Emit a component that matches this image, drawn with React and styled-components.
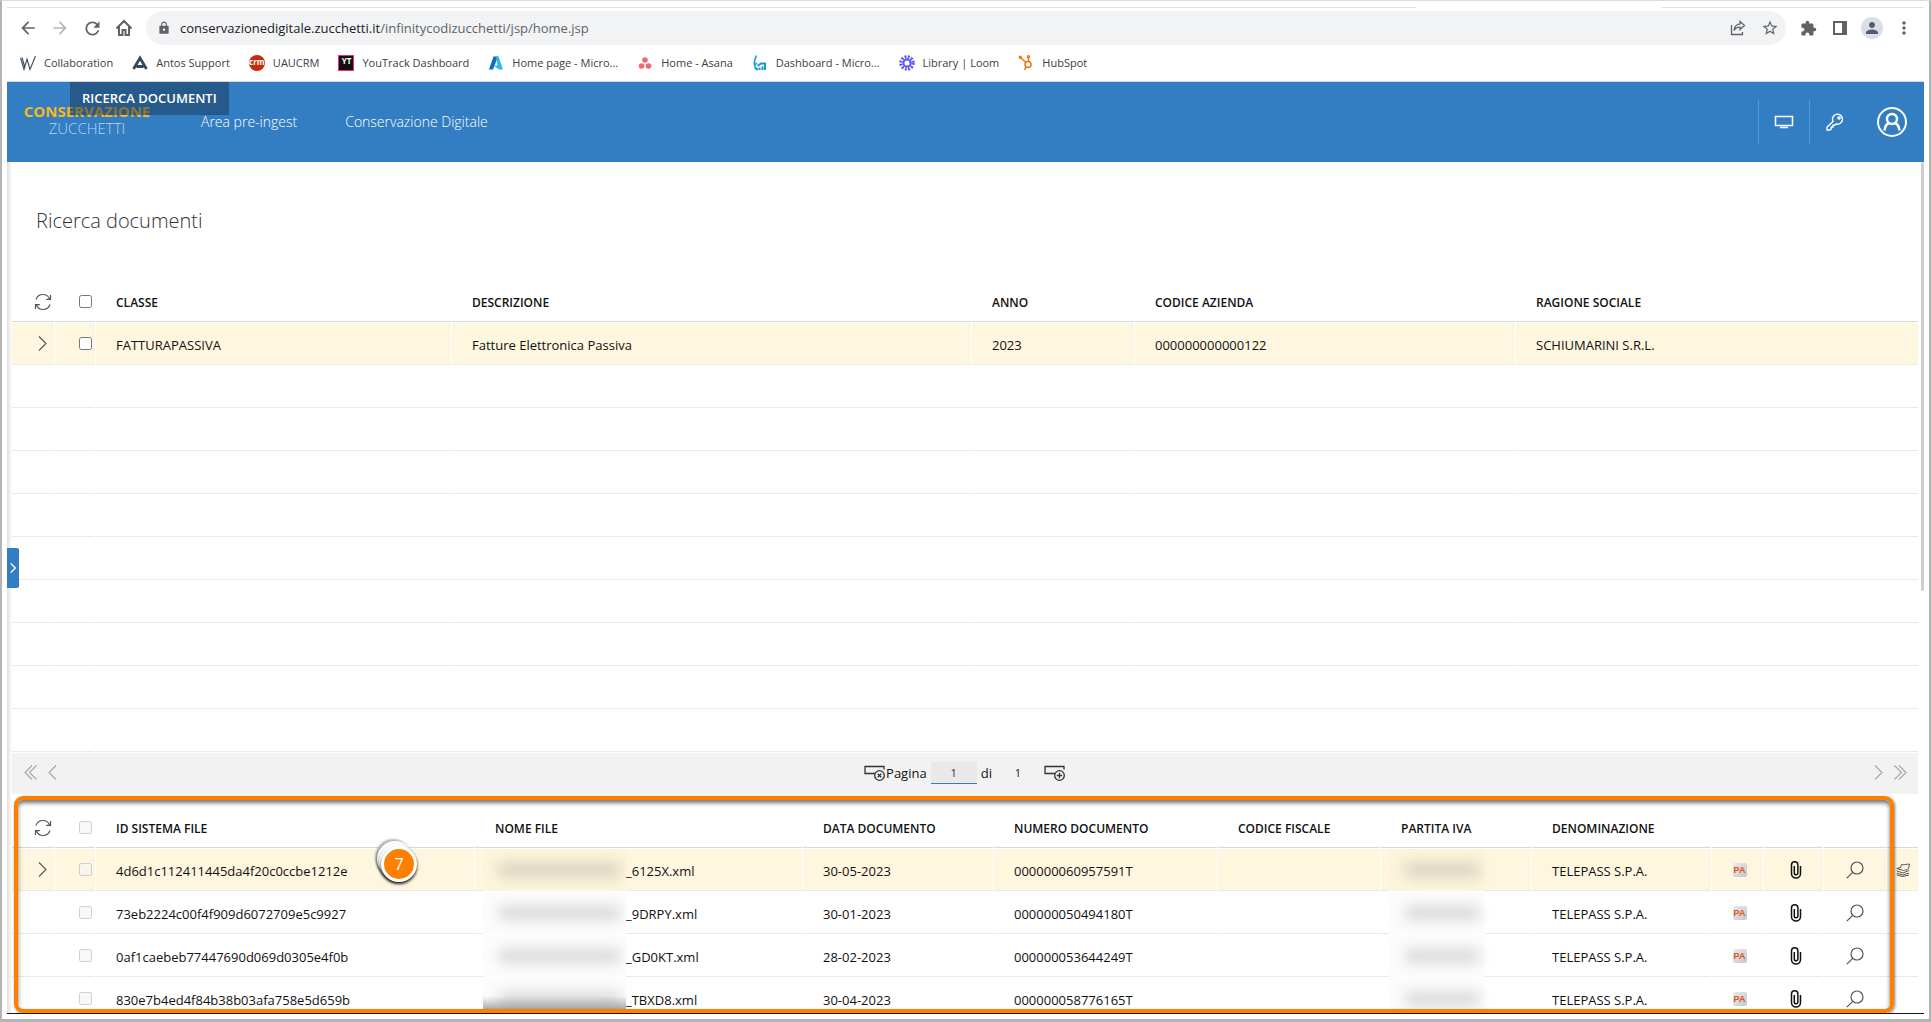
import React from 'react'
import styled, { createGlobalStyle } from 'styled-components'
import { MdArrowBack, MdArrowForward, MdRefresh, MdLock, MdExtension, MdPerson, MdMoreVert, MdStarBorder } from 'react-icons/md'

const GlobalStyle = createGlobalStyle`
  * {
    box-sizing: border-box;
  }
  body {
    margin: 0;
    background: #fff;
    color: #111;
    font-family: "Open Sans", "Noto Sans", sans-serif;
    font-size: 13px;
  }
`

const Frame = styled.div`
  display: flex;
  flex-direction: column;
  height: 100vh;
  padding: 4px 5px 5px;
  border: solid #b4b4b4;
  border-width: 1px 2px 3px;
  border-top-color: #dcdcdc;
`
const IconButton = styled.button`
  display: flex;
  align-items: center;
  justify-content: center;
  flex: none;
  width: ${props => props.$width || 32}px;
  height: 32px;
  padding: 0;
  border: none;
  background: none;
  color: ${props => props.$color || '#5f6368'};
  cursor: pointer;
`

/* Browser bars */
const TabEdge = styled.div`
  display: flex;
  flex: none;
  gap: 246px;
  height: 3px;

  &::before,
  &::after {
    content: "";
    flex: 1;
    border-bottom: 1px solid #dee1e6;
  }
  &::after {
    flex: 0 0 262px;
  }
`
const Toolbar = styled.div`
  display: flex;
  align-items: center;
  flex: none;
  height: 40px;
  padding: 0 4px 0 5px;
`
const AddressBar = styled.div`
  display: flex;
  align-items: center;
  flex: 1;
  height: 34px;
  margin: 0 6px;
  padding-left: 11px;
  border-radius: 17px;
  background: #f1f3f4;
  color: #5f6368;
`
const Address = styled.div`
  flex: 1;
  margin-left: 9px;
  font-size: 13px;

  span {
    color: #202124;
  }
`
const Avatar = styled.span`
  display: flex;
  align-items: center;
  justify-content: center;
  width: 22px;
  height: 22px;
  border-radius: 50%;
  background: #dadfe6;
  color: #505c70;
`
const Bookmarks = styled.nav`
  display: flex;
  align-items: center;
  flex: none;
  gap: 19px;
  height: 34px;
  padding: 0 13px 4px;
  border-bottom: 1px solid #d5d8dc;
`
const Bookmark = styled.a`
  display: flex;
  align-items: center;
  gap: 8px;
  color: #3c4043;
  font-size: 11px;
  text-decoration: none;
  white-space: nowrap;
`
const CrmLogo = styled.span`
  width: 16px;
  height: 16px;
  border-radius: 8px;
  background: #c92a0c;
  color: #fff;
  font-size: 8px;
  font-weight: 700;
  line-height: 14px;
  text-align: center;
`
const TrackLogo = styled.span`
  width: 16px;
  height: 16px;
  border: 1px solid #ee2a7b;
  background: #111;
  color: #fff;
  font-size: 8px;
  font-weight: 700;
  line-height: 10px;
  text-align: center;
`

/* Application */
const Header = styled.header`
  position: relative;
  display: flex;
  align-items: center;
  flex: none;
  height: 80px;
  background: #337dc2;
`
const Logo = styled.div`
  width: 130px;
  margin: 0 49px 0 15px;
  padding-bottom: 4px;
  color: #b5d6f3;
  font-size: 15px;
  font-weight: 300;
  line-height: 17px;
  text-align: center;

  strong {
    display: block;
    color: #f9b71a;
    font-weight: 700;
  }
`
const PageTag = styled.div`
  position: absolute;
  top: 0;
  left: 63px;
  padding: 0 12px;
  background: rgba(26, 55, 84, 0.5);
  color: #fff;
  font-size: 13px;
  font-weight: 600;
  line-height: 33px;
`
const MenuLink = styled.a`
  margin-right: 48px;
  padding-bottom: 2px;
  color: #fff;
  font-size: 14px;
  font-weight: 300;
  text-decoration: none;
`
const HeaderTools = styled.div`
  display: flex;
  align-items: center;
  margin-left: auto;
`
const Tool = styled.div`
  display: flex;
  align-items: center;
  justify-content: center;
  width: 51px;
  height: 44px;
  border-left: 1px solid #5b97d1;
`
const Main = styled.main`
  position: relative;
  display: flex;
  flex-direction: column;
  flex: 1;
  min-height: 0;
  overflow: hidden;
  padding: 0 5px 0 4px;
  border-bottom: 1px solid #15151f;
  background: linear-gradient(to right, #dedede, #fff 5px);
`
const Title = styled.h1`
  flex: none;
  margin: 43px 0 44px 25px;
  color: #333;
  font-size: 20px;
  font-weight: 300;
  line-height: 32px;
`
const SideTab = styled.button`
  position: absolute;
  top: calc(50% - 40px);
  left: 0;
  display: flex;
  align-items: center;
  justify-content: center;
  width: 12px;
  height: 40px;
  padding: 0;
  border: none;
  border-radius: 0 2px 2px 0;
  background: #337dc2;
  color: #fff;
`
const ScrollThumb = styled.div`
  position: absolute;
  top: 0;
  right: 0;
  width: 3px;
  height: 429px;
  border-radius: 2px;
  background: #cdcdcd;
`
const Grid = styled.table`
  flex: none;
  width: 100%;
  table-layout: fixed;
  border-spacing: 1px;
  line-height: 18px;
`
const HeadCell = styled.th`
  height: 40px;
  padding: ${props => (props.$tool ? '0' : '2px 0 0 20px')};
  border-bottom: 1px solid #d8d8d8;
  font-size: 12px;
  font-weight: 600;
  text-align: left;
  white-space: nowrap;
`
const Row = styled.tr`
  background: ${props => (props.$selected ? '#fef6df' : 'transparent')};
`
const Cell = styled.td`
  position: relative;
  height: 42px;
  padding: ${props => (props.$tool ? '0' : '2px 0 0 20px')};
  border-bottom: 1px solid #e9e9e9;
  white-space: nowrap;
`
const Tick = styled.input`
  display: block;
  width: 13px;
  height: 13px;
  margin: 0 0 0 24px;
`
const Centered = styled.div`
  display: flex;
  justify-content: center;
  padding-left: ${props => props.$shift || 0}px;
`
const Redacted = styled.span`
  display: inline-block;
  width: ${props => props.$width}px;
  height: 18px;
  vertical-align: top;

  &::before {
    content: "";
    position: absolute;
    top: 0;
    bottom: -1px;
    left: 8px;
    width: ${props => props.$width + 12}px;
    background: ${props => (props.$selected ? '#fdf4dc' : '#fcfcfc')};
    background-image: ${props => (props.$shaded ? 'linear-gradient(transparent 18px, #a8a8a8 32px)' : 'none')};
  }
  &::after {
    content: "";
    position: absolute;
    top: 14px;
    left: 24px;
    width: ${props => props.$width - 10}px;
    height: 14px;
    background: rgba(90, 90, 90, 0.22);
    filter: blur(7px);
  }
`
const FileName = styled.span`
  position: relative;
`
const PaTag = styled.button`
  width: 14px;
  height: 14px;
  padding: 0;
  border: none;
  border-radius: 2px;
  background: linear-gradient(135deg, #e9ebec, #c4c8ca);
  color: #e2521d;
  font: 700 9px/14px "Liberation Sans", sans-serif;
`
const Pager = styled.div`
  display: flex;
  align-items: center;
  justify-content: space-between;
  flex: none;
  height: 41px;
  margin: 0 1px;
  padding: 0 7px 2px;
  background: #f2f2f2;
`
const PagerGroup = styled.div`
  display: flex;
  align-items: center;
`
const PageInput = styled.input`
  width: 46px;
  height: 22px;
  margin: 0 4px;
  padding: 0;
  border: none;
  border-bottom: 1px solid #337dc2;
  background: #e9e9e9;
  color: #333;
  font: 11px "Open Sans", sans-serif;
  text-align: center;
`
const PageCount = styled.span`
  width: 52px;
  font-size: 11px;
  text-align: center;
`
const Files = styled.section`
  position: relative;
  flex: 1;
  min-height: 0;
  overflow: hidden;
  padding-top: 13px;
`
const Highlight = styled.div`
  position: absolute;
  top: 2px;
  right: 25px;
  bottom: 0;
  left: 3px;
  border: 4px solid #ff8000;
  border-radius: 9px;
  box-shadow: inset 0 3px 4px rgba(0, 0, 0, 0.55), 1px 1px 3px rgba(0, 0, 0, 0.5);
  pointer-events: none;
`
const StepBadge = styled.div`
  position: absolute;
  top: 52px;
  left: 370px;
  width: 36px;
  height: 36px;
  border: 3px solid #fff;
  border-radius: 50%;
  background: #ff8000;
  box-shadow: 0 2px 3px #222, -2px -2px 0 #fff, -2px 0 3px #333, -4px -5px 0 #fff, -5px -4px 2px #777, -6px -7px 2px #bbb;
  color: #fff;
  font-size: 16px;
  line-height: 30px;
  text-align: center;
`

const HomeIcon = () => (
  <svg width="18" height="18" viewBox="0 0 18 18" fill="none" stroke="currentColor" strokeWidth="2">
    <path d="M1.500 9.500L9 2l7.500 7.500M4 7.500V16h3.500v-5h3v5H14V7.500" />
  </svg>
)
const ShareIcon = () => (
  <svg width="16" height="16" viewBox="0 0 16 16" fill="none" stroke="currentColor" strokeWidth="1.300">
    <path d="M1.500 5v9.500h11V12M10 1.500L14.500 5.500 10 9.500V7.200C7.500 7.200 5.500 8 4 10.500 4.500 6.500 6.500 4.200 10 3.800z" />
  </svg>
)
const PanelIcon = () => (
  <svg width="14" height="14" viewBox="0 0 14 14">
    <path fill="currentColor" d="M0 0h14v14H0zM2 2v10h7V2z" fillRule="evenodd" />
  </svg>
)
const MonitorIcon = () => (
  <svg width="20" height="14" viewBox="0 0 20 14" fill="none" stroke="#fff" strokeWidth="1.500">
    <path d="M1.500 1.500h17v9h-17zM6 12.500h8" />
  </svg>
)
const KeyIcon = () => (
  <svg width="18" height="18" viewBox="0 0 18 18" fill="none" stroke="#fff" strokeWidth="1.400">
    <path d="M7 8.500A5 5 0 1 1 10 11L8.500 12.300H7v1.700H5.200V16L4 17H1v-3z" />
    <circle cx="13" cy="5" r="1.100" />
  </svg>
)
const UserIcon = () => (
  <svg width="32" height="32" viewBox="0 0 32 32" fill="none" stroke="#fff" strokeWidth="2">
    <circle cx="16" cy="16" r="14" />
    <circle cx="16" cy="13" r="5" strokeWidth="2.500" />
    <path d="M8.500 24.500c.5-4 2-6.500 4.500-7.500M23.500 24.500c-.5-4-2-6.500-4.500-7.500" strokeWidth="2.500" />
  </svg>
)
const ReloadIcon = () => (
  <svg width="18" height="18" viewBox="0 0 18 18" fill="none" stroke="#555" strokeWidth="1.200">
    <path d="M2 6.500C3 3.500 5.500 1.500 9 1.500c3 0 5.500 1.800 6.700 4.500M16.500 2v4.300h-4.300M16 11.500c-1 3-3.500 5-7 5-3 0-5.500-1.800-6.700-4.500M1.500 16v-4.300h4.300" />
  </svg>
)
const Chevron = ({ left, double, size = 15, color = '#a5a5a5' }) => (
  <svg width={size} height={size} viewBox="0 0 15 15" fill="none" stroke={color} strokeWidth={size < 12 ? 2 : 1.1}>
    <g transform={left ? 'matrix(-1 0 0 1 15 0)' : undefined}>
      <path d={double ? 'M1.500 .5l7 7-7 7M6 .5l7 7-7 7' : 'M4 .5l7 7-7 7'} />
    </g>
  </svg>
)
const RowIcon = ({ add }) => (
  <svg width="22" height="16" viewBox="0 0 22 16" fill="none" stroke="#333" strokeWidth="1.300">
    <path d="M11 8.500H1v-7h19v3" />
    <circle cx="15.500" cy="10.500" r="4.800" fill="#f2f2f2" />
    <path d={add ? 'M12.800 10.500h5.400M15.500 7.800v5.400' : 'M13.700 8.700l3.600 3.600M17.300 8.700l-3.600 3.600'} />
  </svg>
)
const ClipIcon = () => (
  <svg width="12" height="18" viewBox="0 0 12 18" fill="none" stroke="#111" strokeWidth="1.500">
    <path d="M10.500 5v7.500a4.500 4.500 0 0 1-9 0V4a3.200 3.200 0 0 1 6.400 0v8a1.800 1.800 0 0 1-3.600 0V5" />
  </svg>
)
const SearchIcon = () => (
  <svg width="18" height="18" viewBox="0 0 18 18" fill="none" stroke="#555" strokeWidth="1.200">
    <circle cx="11" cy="7" r="6" />
    <path d="M6.700 11.300L.8 17.200" />
  </svg>
)
const LayersIcon = () => (
  <svg width="14" height="14" viewBox="0 0 14 14" fill="none" stroke="#444" strokeWidth=".9">
    <path d="M5.500 1.500c2.500 1 5-.5 8-.5l-1 4.500c-2 2-3.500 1.500-5 2L.8 5.500 4.500 4.500zM.8 8L7 10l6-2.500M.8 10.300L7 12l6-2M.8 12l6.200 1.500 6-1.500" />
  </svg>
)

const bookmarks = [
  {
    label: 'Collaboration',
    icon: (
      <svg width="16" height="16" viewBox="0 0 16 16" fill="none" stroke="#3d4a63" strokeWidth="1.100">
        <path d="M.5 3l3.500 11.500L7 4l3 10.500L15.500 1M2 2.500L5 13" />
      </svg>
    )
  },
  {
    label: 'Antos Support',
    icon: (
      <svg width="16" height="16" viewBox="0 0 16 16" fill="none" stroke="#34495e" strokeWidth="2.800">
        <path d="M1.500 14L8 3l6.500 11M4.500 11.500h7" />
      </svg>
    )
  },
  { label: 'UAUCRM', icon: <CrmLogo>crm</CrmLogo> },
  { label: 'YouTrack Dashboard', icon: <TrackLogo>YT</TrackLogo> },
  {
    label: 'Home page - Micro...',
    icon: (
      <svg width="16" height="16" viewBox="0 0 16 16">
        <path fill="#0f6cbd" d="M5.500 1.500h4.500L5 14.500H1z" />
        <path fill="#35b5f0" d="M8 1.500h2.500L15 14.500h-4L5.500 10.500h4z" />
      </svg>
    )
  },
  {
    label: 'Home - Asana',
    icon: (
      <svg width="16" height="16" viewBox="0 0 16 16" fill="#f06a6a">
        <circle cx="8" cy="5" r="2.800" />
        <circle cx="4.500" cy="11" r="2.800" />
        <circle cx="11.500" cy="11" r="2.800" />
      </svg>
    )
  },
  {
    label: 'Dashboard - Micro...',
    icon: (
      <svg width="16" height="16" viewBox="0 0 16 16" fill="none" stroke="#1899d6">
        <path strokeWidth="1.500" d="M4.500 .5C2.500 4 2 7 2.500 10.500L5 8" />
        <path strokeWidth="2" d="M3 11.500c.5 2 1.500 3 3 3M7.500 15v-2.500M10.500 15v-3.500M13 15V8.500H9L5.500 11" />
      </svg>
    )
  },
  {
    label: 'Library | Loom',
    icon: (
      <svg width="16" height="16" viewBox="0 0 16 16" fill="none" stroke="#625df5" strokeWidth="2">
        <circle cx="8" cy="8" r="3.500" />
        <circle cx="8" cy="8" r="6" strokeWidth="3.600" strokeDasharray="1.900 1.240" />
      </svg>
    )
  },
  {
    label: 'HubSpot',
    icon: (
      <svg width="16" height="16" viewBox="0 0 16 16" fill="none" stroke="#e8761a" strokeWidth="1.500">
        <circle cx="10" cy="9.500" r="3" />
        <path d="M10.500 6.500V2M8 7.500L2.500 2.500M8 12l-1.500 3" />
        <circle cx="10.500" cy="1.800" r="1" />
        <circle cx="2.300" cy="2.200" r="1" />
      </svg>
    )
  }
]

const classColumns = [
  { label: 'CLASSE', width: 355 },
  { label: 'DESCRIZIONE', width: 519 },
  { label: 'ANNO', width: 162 },
  { label: 'CODICE AZIENDA', width: 380 },
  { label: 'RAGIONE SOCIALE' }
]
const classRow = ['FATTURAPASSIVA', 'Fatture Elettronica Passiva', '2023', '000000000000122', 'SCHIUMARINI S.R.L.']
const emptyRows = [1, 2, 3, 4, 5, 6, 7, 8, 9]

const fileColumns = [
  { label: 'ID SISTEMA FILE', width: 378 },
  { label: 'NOME FILE', width: 327 },
  { label: 'DATA DOCUMENTO', width: 190 },
  { label: 'NUMERO DOCUMENTO', width: 223 },
  { label: 'CODICE FISCALE', width: 162 },
  { label: 'PARTITA IVA', width: 150 },
  { label: 'DENOMINAZIONE' },
  { label: '', width: 51 },
  { label: '', width: 59 },
  { label: '', width: 62 },
  { label: '', width: 31 }
]
const files = [
  { id: '4d6d1c112411445da4f20c0ccbe1212e', name: '_6125X.xml', date: '30-05-2023', number: '000000060957591T' },
  { id: '73eb2224c00f4f909d6072709e5c9927', name: '_9DRPY.xml', date: '30-01-2023', number: '000000050494180T' },
  { id: '0af1caebeb77447690d069d0305e4f0b', name: '_GD0KT.xml', date: '28-02-2023', number: '000000053644249T' },
  { id: '830e7b4ed4f84b38b03afa758e5d659b', name: '_TBXD8.xml', date: '30-04-2023', number: '000000058776165T' }
]

const GridHead = ({ columns, disabled }) => (
  <>
    <colgroup>
      <col style={{ width: 42 }} />
      <col style={{ width: 40 }} />
      {columns.map((column, index) => <col key={index} style={{ width: column.width }} />)}
    </colgroup>
    <thead>
      <tr>
        <HeadCell $tool>
          <Centered $shift={20}>
            <IconButton $width={18} aria-label="Aggiorna"><ReloadIcon /></IconButton>
          </Centered>
        </HeadCell>
        <HeadCell $tool><Tick type="checkbox" aria-label="Seleziona tutto" disabled={disabled} /></HeadCell>
        {columns.map((column, index) => <HeadCell key={index}>{column.label}</HeadCell>)}
      </tr>
    </thead>
  </>
)

const BrowserBars = () => (
  <>
    <TabEdge />
    <Toolbar>
      <IconButton aria-label="Indietro"><MdArrowBack size={20} /></IconButton>
      <IconButton aria-label="Avanti" $color="#b6b8ba"><MdArrowForward size={20} /></IconButton>
      <IconButton aria-label="Ricarica"><MdRefresh size={21} /></IconButton>
      <IconButton aria-label="Home"><HomeIcon /></IconButton>
      <AddressBar>
        <MdLock size={14} />
        <Address><span>conservazionedigitale.zucchetti.it</span>/infinitycodizucchetti/jsp/home.jsp</Address>
        <IconButton aria-label="Condividi"><ShareIcon /></IconButton>
        <IconButton aria-label="Preferiti"><MdStarBorder size={18} /></IconButton>
      </AddressBar>
      <IconButton aria-label="Estensioni"><MdExtension size={17} /></IconButton>
      <IconButton aria-label="Pannello laterale"><PanelIcon /></IconButton>
      <IconButton aria-label="Profilo"><Avatar><MdPerson size={18} /></Avatar></IconButton>
      <IconButton aria-label="Menu"><MdMoreVert size={20} /></IconButton>
    </Toolbar>
    <Bookmarks>
      {bookmarks.map(bookmark => (
        <Bookmark key={bookmark.label} href="#">
          {bookmark.icon}
          {bookmark.label}
        </Bookmark>
      ))}
    </Bookmarks>
  </>
)

const ClassGrid = () => (
  <Grid>
    <GridHead columns={classColumns} />
    <tbody>
      <Row $selected>
        <Cell $tool><Centered $shift={18}><Chevron color="#555" /></Centered></Cell>
        <Cell $tool><Tick type="checkbox" aria-label="Seleziona FATTURAPASSIVA" /></Cell>
        {classRow.map(value => <Cell key={value}>{value}</Cell>)}
      </Row>
      {emptyRows.map(row => (
        <Row key={row}>
          <Cell />
          <Cell />
          {classColumns.map(column => <Cell key={column.label} />)}
        </Row>
      ))}
    </tbody>
  </Grid>
)

const FileGrid = () => (
  <Grid>
    <GridHead columns={fileColumns} disabled />
    <tbody>
      {files.map((file, index) => {
        const selected = index === 0
        return (
          <Row key={file.id} $selected={selected}>
            <Cell $tool>{selected && <Centered $shift={18}><Chevron color="#555" /></Centered>}</Cell>
            <Cell $tool><Tick type="checkbox" aria-label={`Seleziona ${file.id}`} disabled /></Cell>
            <Cell>{file.id}</Cell>
            <Cell>
              <Redacted $width={131} $selected={selected} $shaded={index === files.length - 1} />
              <FileName>{file.name}</FileName>
            </Cell>
            <Cell>{file.date}</Cell>
            <Cell>{file.number}</Cell>
            <Cell />
            <Cell><Redacted $width={84} $selected={selected} /></Cell>
            <Cell>TELEPASS S.P.A.</Cell>
            <Cell $tool><Centered $shift={4}><PaTag>PA</PaTag></Centered></Cell>
            <Cell $tool><Centered $shift={4}><ClipIcon /></Centered></Cell>
            <Cell $tool><Centered><SearchIcon /></Centered></Cell>
            <Cell $tool>{selected && <Centered><LayersIcon /></Centered>}</Cell>
          </Row>
        )
      })}
    </tbody>
  </Grid>
)

const App = () => {
  return (
    <Frame>
      <GlobalStyle />
      <BrowserBars />
      <Header>
        <Logo>
          <strong>CONSERVAZIONE</strong>
          ZUCCHETTI
        </Logo>
        <PageTag>RICERCA DOCUMENTI</PageTag>
        <MenuLink href="#">Area pre-ingest</MenuLink>
        <MenuLink href="#">Conservazione Digitale</MenuLink>
        <HeaderTools>
          <Tool><IconButton aria-label="Schermo"><MonitorIcon /></IconButton></Tool>
          <Tool><IconButton aria-label="Password"><KeyIcon /></IconButton></Tool>
          <IconButton $width={64} aria-label="Utente"><UserIcon /></IconButton>
        </HeaderTools>
      </Header>
      <Main>
        <Title>Ricerca documenti</Title>
        <ClassGrid />
        <Pager>
          <PagerGroup>
            <IconButton $width={22} aria-label="Prima pagina"><Chevron left double /></IconButton>
            <IconButton $width={22} aria-label="Pagina precedente"><Chevron left /></IconButton>
          </PagerGroup>
          <PagerGroup>
            <IconButton $width={22} aria-label="Meno righe"><RowIcon /></IconButton>
            <label htmlFor="page">Pagina</label>
            <PageInput id="page" defaultValue="1" />
            di
            <PageCount>1</PageCount>
            <IconButton $width={22} aria-label="Più righe"><RowIcon add /></IconButton>
          </PagerGroup>
          <PagerGroup>
            <IconButton $width={22} aria-label="Pagina successiva"><Chevron /></IconButton>
            <IconButton $width={22} aria-label="Ultima pagina"><Chevron double /></IconButton>
          </PagerGroup>
        </Pager>
        <Files>
          <FileGrid />
          <Highlight />
          <StepBadge>7</StepBadge>
        </Files>
        <SideTab aria-label="Apri pannello"><Chevron size={10} color="#fff" /></SideTab>
        <ScrollThumb />
      </Main>
    </Frame>
  )
}

export default App
